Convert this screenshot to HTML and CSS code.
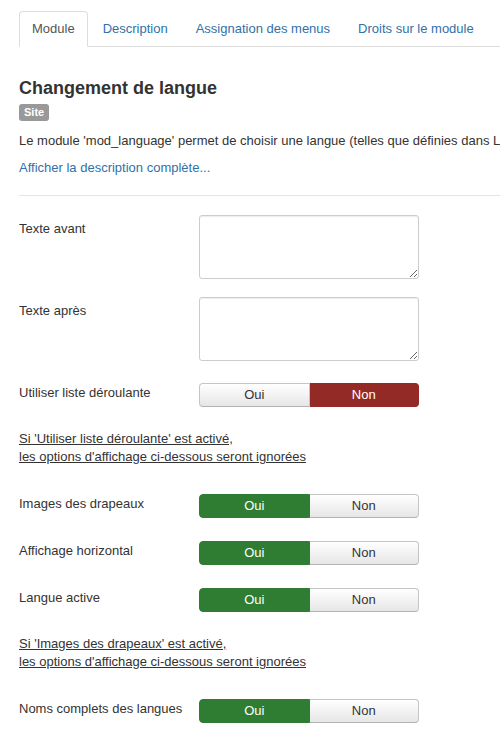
FILE: index.html
```html
<!DOCTYPE html>
<html lang="fr">
<head>
<meta charset="utf-8">
<title>Module</title>
<link rel="stylesheet" href="styles.css">
</head>
<body>
<div class="page">
  <ul class="tabs">
    <li class="tab active"><span>Module</span></li>
    <li class="tab"><a href="#">Description</a></li>
    <li class="tab"><a href="#">Assignation des menus</a></li>
    <li class="tab"><a href="#">Droits sur le module</a></li>
  </ul>

  <h3 class="title">Changement de langue</h3>
  <span class="badge">Site</span>
  <p class="desc">Le module 'mod_language' permet de choisir une langue (telles que définies dans Langues : Contenus), qui est utilisée pour le site multilingue.</p>
  <a class="more" href="#">Afficher la description complète...</a>
  <hr class="sep">

  <div class="row row-text">
    <label class="label">Texte avant</label>
    <textarea class="area"></textarea>
  </div>
  <div class="row row-text">
    <label class="label">Texte après</label>
    <textarea class="area"></textarea>
  </div>

  <div class="row row-toggle">
    <label class="label">Utiliser liste déroulante</label>
    <div class="toggle">
      <span class="opt">Oui</span>
      <span class="opt on-no">Non</span>
    </div>
  </div>

  <div class="note">Si 'Utiliser liste déroulante' est activé, <br>les options d'affichage ci-dessous seront ignorées</div>

  <div class="row row-toggle">
    <label class="label">Images des drapeaux</label>
    <div class="toggle">
      <span class="opt on-yes">Oui</span>
      <span class="opt">Non</span>
    </div>
  </div>
  <div class="row row-toggle">
    <label class="label">Affichage horizontal</label>
    <div class="toggle">
      <span class="opt on-yes">Oui</span>
      <span class="opt">Non</span>
    </div>
  </div>
  <div class="row row-toggle">
    <label class="label">Langue active</label>
    <div class="toggle">
      <span class="opt on-yes">Oui</span>
      <span class="opt">Non</span>
    </div>
  </div>

  <div class="note">Si 'Images des drapeaux' est activé, <br>les options d'affichage ci-dessous seront ignorées</div>

  <div class="row row-toggle">
    <label class="label">Noms complets des langues</label>
    <div class="toggle">
      <span class="opt on-yes">Oui</span>
      <span class="opt">Non</span>
    </div>
  </div>
</div>
</body>
</html>
```

FILE: styles.css
```css
html, body {
  margin: 0;
  padding: 0;
  background: #fff;
  overflow: hidden;
}
body {
  font-family: "Liberation Sans", Arial, sans-serif;
  font-size: 13px;
  line-height: 18px;
  color: #333;
}
.page {
  padding: 11px 0 0 19px;
  overflow: hidden;
}
a {
  color: #3071a9;
  text-decoration: none;
}
.tabs {
  list-style: none;
  margin: 0;
  padding: 0;
  display: flex;
  border-bottom: 1px solid #ddd;
}
.tab {
  margin: 0 2px -1px 0;
  padding: 8px 12px;
  border: 1px solid transparent;
  border-radius: 4px 4px 0 0;
  line-height: 18px;
  white-space: nowrap;
}
.tab.active {
  border-color: #ddd #ddd transparent;
  background: #fff;
  color: #555;
}
.title {
  margin: 31px 0 0;
  font-size: 18px;
  line-height: 20px;
  font-weight: bold;
  color: #333;
}
.badge {
  display: inline-block;
  margin-top: 6px;
  padding: 0 5px;
  background: #999;
  color: #fff;
  font-size: 11px;
  font-weight: bold;
  line-height: 17px;
  border-radius: 3px;
  vertical-align: top;
}
.desc {
  margin: 11px 0 0;
  white-space: nowrap;
}
.more {
  display: block;
  margin-top: 9px;
}
.sep {
  margin: 18px 0 19px;
  border: 0;
  border-top: 1px solid #e5e5e5;
  height: 0;
}
.row {
  display: flex;
  align-items: flex-start;
}
.label {
  width: 180px;
  flex: none;
}
.row-text {
  margin-bottom: 18px;
}
.row-text .label {
  padding-top: 5px;
}
.area {
  display: block;
  box-sizing: border-box;
  width: 220px;
  height: 64px;
  margin: 0;
  padding: 4px 6px;
  border: 1px solid #ccc;
  border-radius: 3px;
  box-shadow: inset 0 1px 1px rgba(0,0,0,0.075);
  font-family: inherit;
  font-size: 13px;
  background: #fff;
}
.row-toggle {
  padding-top: 4px;
  margin-bottom: 19px;
}
.row-toggle .label {
  margin-top: -4px;
  padding-top: 5px;
}
.row-text + .row-toggle {
  margin-top: 4px;
}
.toggle {
  display: flex;
  width: 220px;
  height: 24px;
  box-sizing: border-box;
}
.opt {
  flex: 1;
  box-sizing: border-box;
  height: 24px;
  line-height: 22px;
  text-align: center;
  color: #333;
  background: linear-gradient(#fff, #e6e6e6);
  border: 1px solid #c5c5c5;
  border-bottom-color: #b3b3b3;
}
.opt:first-child {
  border-radius: 4px 0 0 4px;
}
.opt:last-child {
  border-radius: 0 4px 4px 0;
  border-left: 0;
}
.opt.on-no {
  background: #942a25;
  border-color: #942a25;
  color: #fff;
}
.opt.on-yes {
  background: #2f7d32;
  border-color: #2f7d32;
  color: #fff;
}
.note {
  padding-top: 4px;
  margin-bottom: 24px;
  text-decoration: underline;
}
```
